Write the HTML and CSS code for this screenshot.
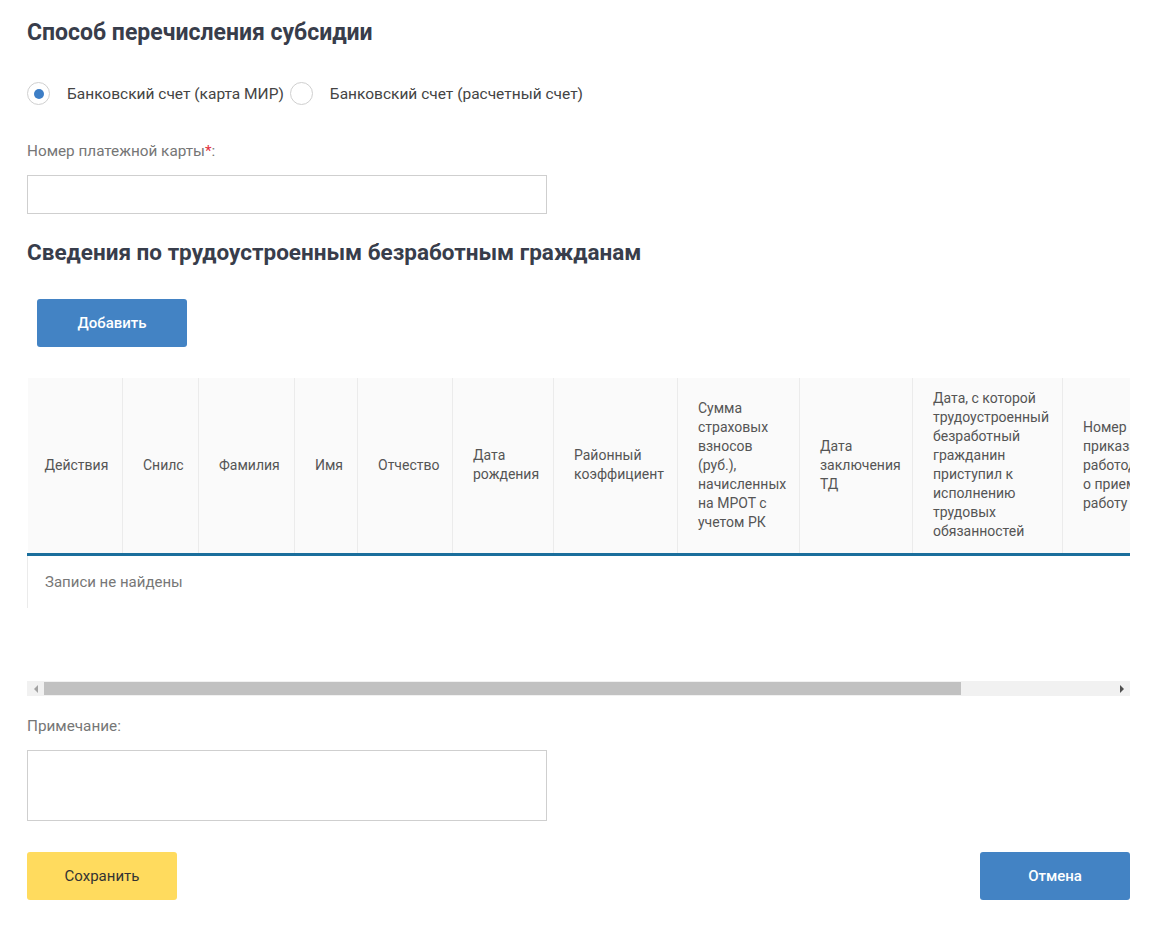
FILE: index.html
```
<!DOCTYPE html>
<html lang="ru">
<head>
	<meta charset="utf-8">
	<title>Способ перечисления субсидии</title>
	<link rel="stylesheet" href="styles.css">
</head>
<body>
	<div class="page">
		<h2 class="title">Способ перечисления субсидии</h2>

		<div class="radios">
			<label class="radio checked"><span class="dot"></span>Банковский счет (карта МИР)</label>
			<label class="radio"><span class="dot"></span>Банковский счет (расчетный счет)</label>
		</div>

		<div class="field">
			<div class="label">Номер платежной карты<span class="req">*</span>:</div>
			<div class="input"></div>
		</div>

		<h2 class="title title-2">Сведения по трудоустроенным безработным гражданам</h2>

		<div class="toolbar">
			<button class="btn btn-blue">Добавить</button>
		</div>

		<div class="grid">
			<div class="grid-scroll">
				<table class="table">
					<colgroup>
						<col style="width:95px"><col style="width:76px"><col style="width:96px"><col style="width:63px">
						<col style="width:95px"><col style="width:101px"><col style="width:124px"><col style="width:122px">
						<col style="width:113px"><col style="width:150px"><col style="width:271px">
					</colgroup>
					<thead>
						<tr>
							<th>Действия</th>
							<th>Снилс</th>
							<th>Фамилия</th>
							<th>Имя</th>
							<th>Отчество</th>
							<th>Дата рождения</th>
							<th>Районный коэффициент</th>
							<th>Сумма страховых взносов (руб.), начисленных на МРОТ с учетом РК</th>
							<th>Дата заключения ТД</th>
							<th>Дата, с которой трудоустроенный безработный гражданин приступил к исполнению трудовых обязанностей</th>
							<th><span class="last">Номер приказа работодателя о приеме на работу</span></th>
						</tr>
					</thead>
					<tbody>
						<tr><td class="empty" colspan="11">Записи не найдены</td></tr>
					</tbody>
				</table>
			</div>
			<div class="scrollbar">
				<span class="arrow arrow-left"></span>
				<div class="track"><div class="thumb"></div></div>
				<span class="arrow arrow-right"></span>
			</div>
		</div>

		<div class="field field-note">
			<div class="label">Примечание:</div>
			<div class="textarea"></div>
		</div>

		<div class="actions">
			<button class="btn btn-yellow">Сохранить</button>
			<button class="btn btn-blue">Отмена</button>
		</div>
	</div>
</body>
</html>
```

FILE: styles.css
```
body {
	margin: 0;
	background: #fff;
	font-family: Roboto, "Noto Sans", sans-serif;
	color: #444;
}
.page {
	padding: 16px 27px 30px 27px;
	width: 1103px;
}
.title {
	margin: 0;
	font-size: 23px;
	font-weight: 700;
	color: #383d4b;
	line-height: 34px;
}
.title-2 {
	margin-top: 21px;
	font-size: 22.5px;
}

.radios {
	display: flex;
	align-items: center;
	margin-top: 32px;
}
.radio {
	display: flex;
	align-items: center;
	font-size: 15.5px;
	color: #444;
	margin-right: 6px;
}
.radio .dot {
	width: 23px;
	height: 23px;
	border: 1px solid #cfcfcf;
	border-radius: 50%;
	margin-right: 17px;
	box-sizing: border-box;
	position: relative;
}
.radio.checked .dot:after {
	content: "";
	position: absolute;
	left: 5.5px;
	top: 5.5px;
	width: 10px;
	height: 10px;
	border-radius: 50%;
	background: #3d7ec6;
}

.field {
	margin-top: 36px;
}
.field-note {
	margin-top: 20px;
}
.label {
	font-size: 15.3px;
	color: #767676;
	line-height: 20px;
}
.req {
	color: #e3303f;
}
.input {
	margin-top: 14px;
	width: 520px;
	height: 39px;
	border: 1px solid #cfcfcf;
	box-sizing: border-box;
}
.textarea {
	margin-top: 14px;
	width: 520px;
	height: 71px;
	border: 1px solid #cfcfcf;
	box-sizing: border-box;
}

.toolbar {
	margin-top: 30px;
	padding-left: 10px;
}
.btn {
	width: 150px;
	height: 48px;
	border: none;
	border-radius: 3px;
	font-family: Roboto, "Noto Sans", sans-serif;
	font-size: 15px;
	font-weight: 500;
	cursor: pointer;
}
.btn-blue {
	background: #4383c4;
	color: #fff;
}
.btn-yellow {
	background: #ffdb5e;
	color: #333;
	font-weight: 400;
}

.grid {
	margin-top: 31px;
}
.grid-scroll {
	overflow: hidden;
	height: 303px;
}
.table {
	table-layout: fixed;
	width: 1306px;
	border-collapse: collapse;
	font-size: 14px;
	line-height: 19px;
}
.table th {
	background: #fafafa;
	color: #555;
	font-weight: 400;
	text-align: left;
	padding: 11px 18px 12px 20px;
	border-left: 1px solid #ebebeb;
	border-bottom: 3px solid #1a6e9c;
	height: 152px;
}
.table th:first-child {
	border-left: none;
	padding-left: 17px;
}
.table th .last {
	display: block;
	width: 85px;
}
.table td.empty {
	color: #777;
	padding: 16px 17px;
	height: 20px;
	border-left: 1px solid #ebebeb;
	font-size: 15px;
}

.scrollbar {
	display: flex;
	align-items: center;
	height: 15px;
	background: #f1f1f1;
}
.arrow {
	width: 17px;
	height: 15px;
	display: flex;
	align-items: center;
	justify-content: center;
}
.arrow-left:before,
.arrow-right:before {
	content: "";
	border-top: 4px solid transparent;
	border-bottom: 4px solid transparent;
}
.arrow-left:before {
	border-right: 4px solid #a3a3a3;
}
.arrow-right:before {
	border-left: 4px solid #505050;
}
.track {
	flex: 1;
	height: 13px;
}
.thumb {
	width: 917px;
	height: 13px;
	background: #c1c1c1;
}

.actions {
	display: flex;
	justify-content: space-between;
	margin-top: 31px;
}
```
